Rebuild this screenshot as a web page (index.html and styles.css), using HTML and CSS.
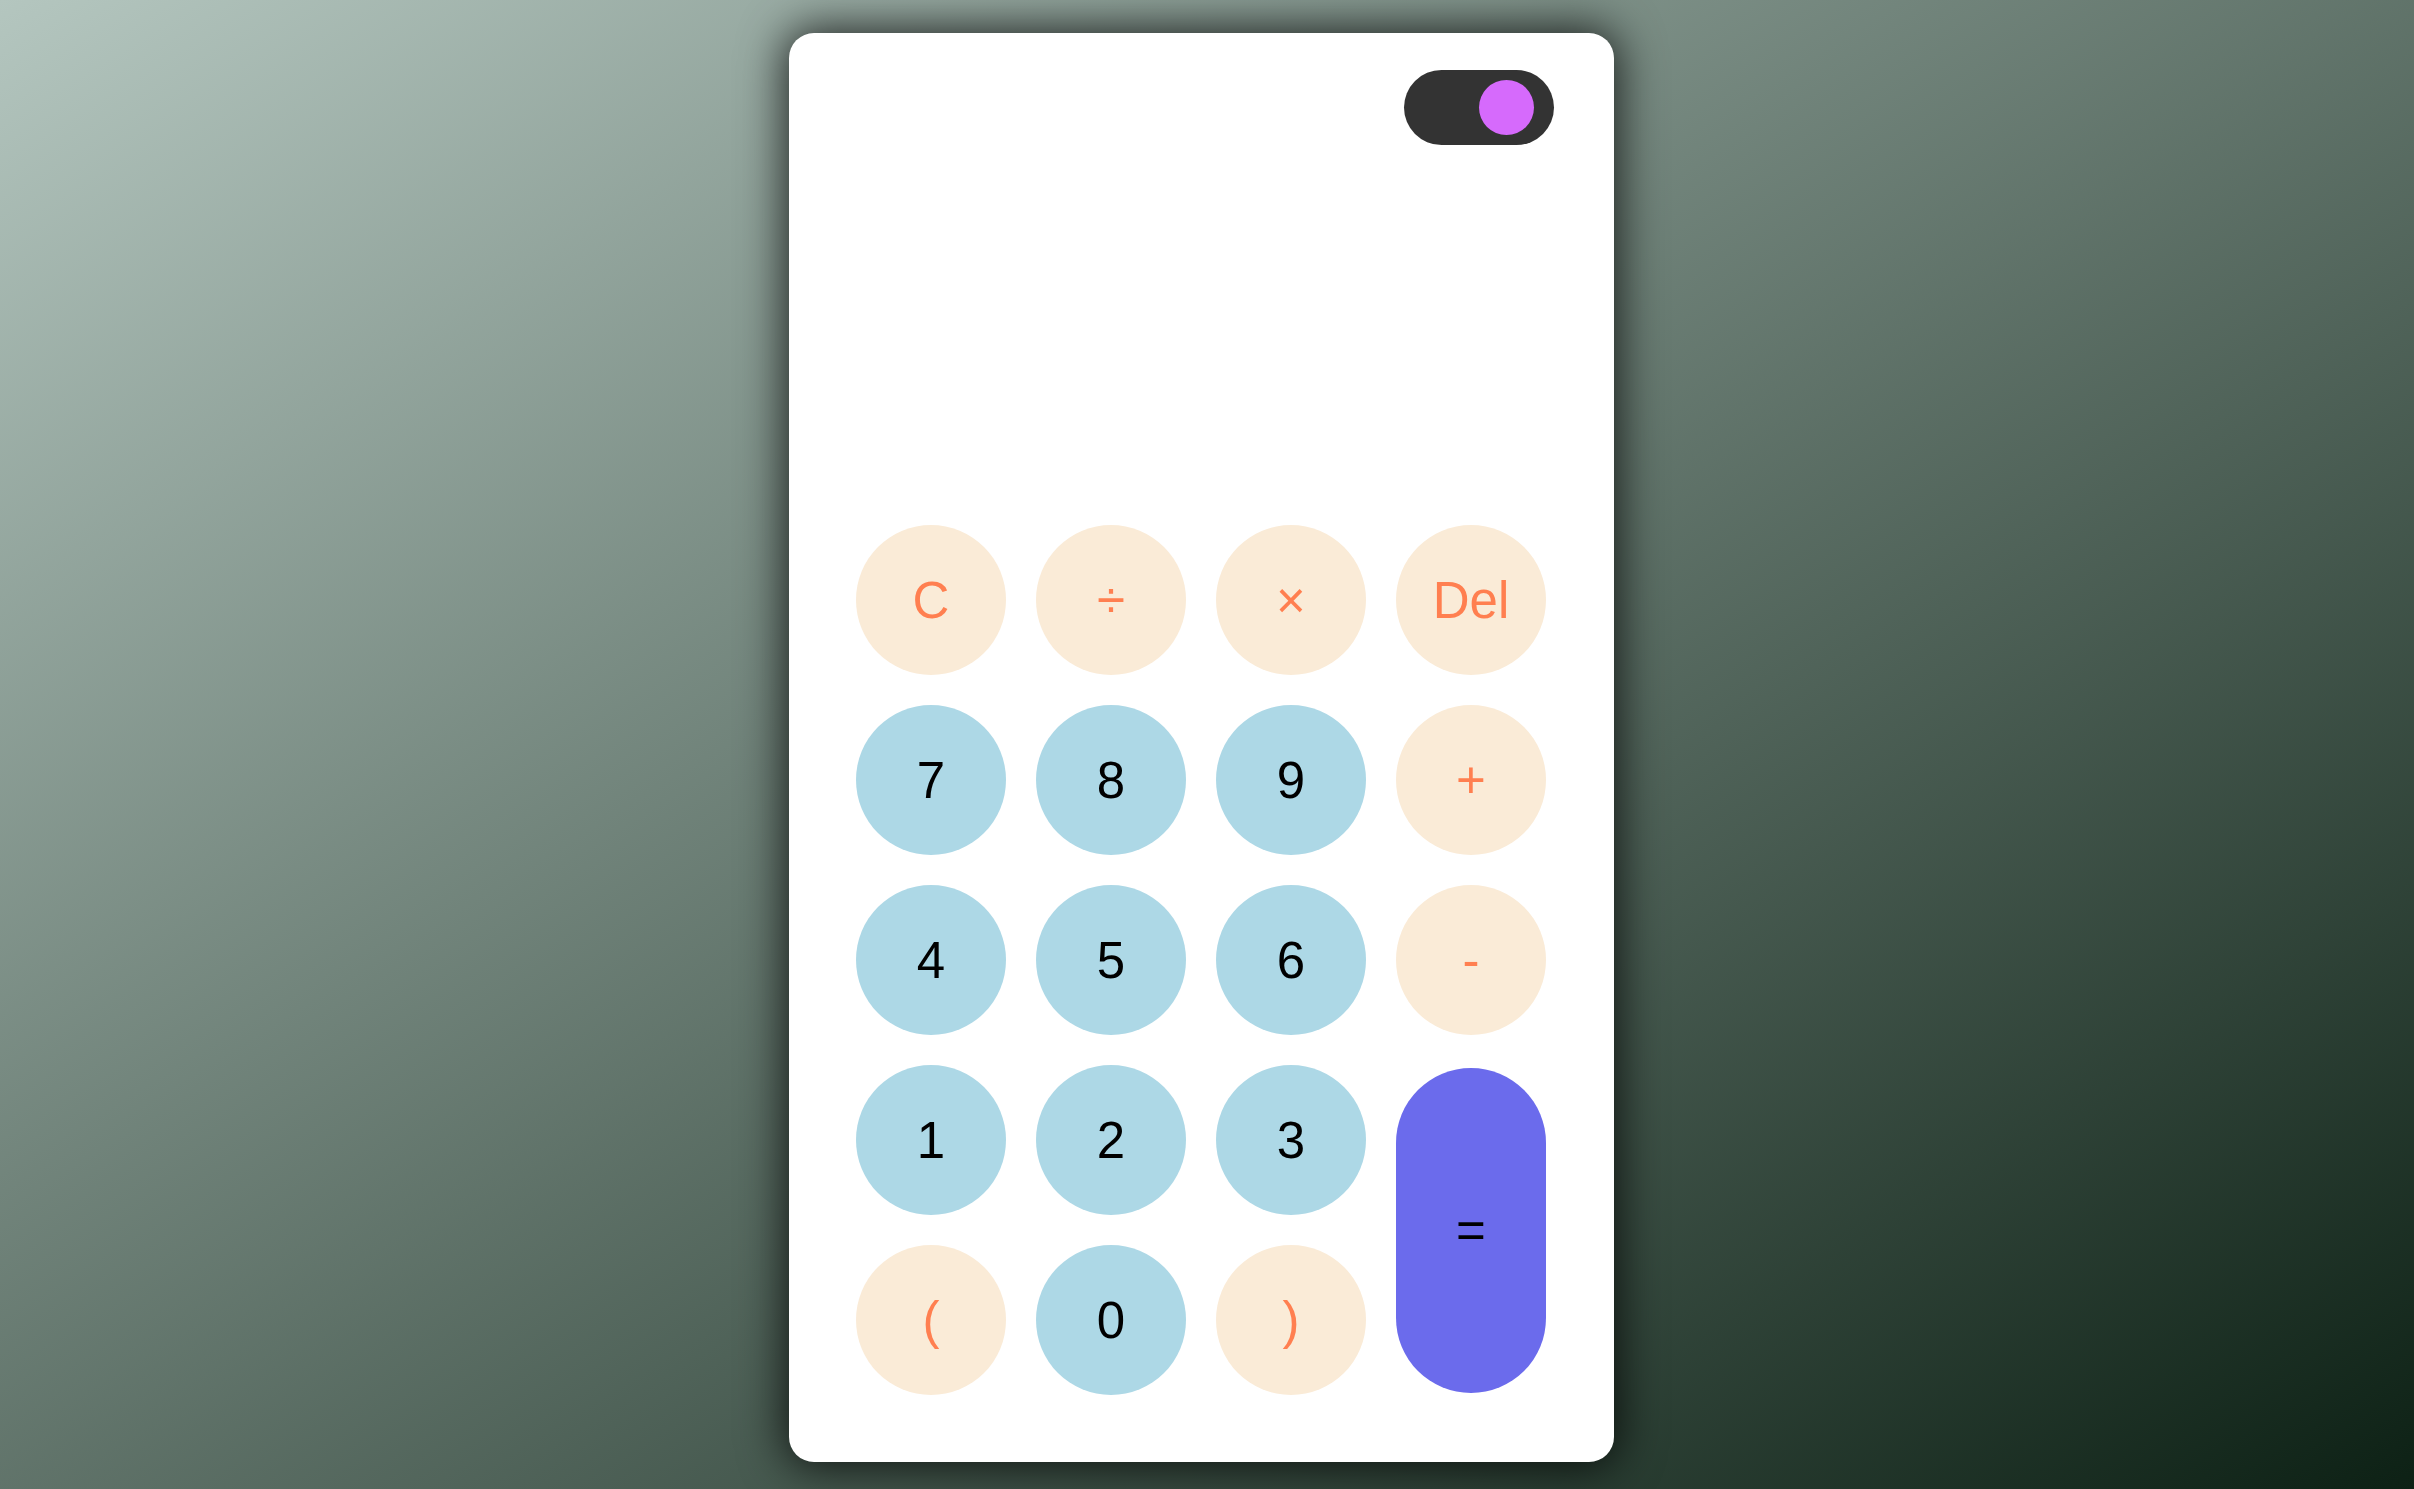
FILE: index.html
```html
<!DOCTYPE html>
<html lang="en">
<head>
<meta charset="utf-8">
<title>Calculator</title>
<link rel="stylesheet" href="styles.css">
</head>
<body>
<main class="calc">
  <div class="toggle"><span class="knob"></span></div>
  <div class="display"></div>
  <div class="keypad">
    <button class="key op">C</button>
    <button class="key op">÷</button>
    <button class="key op">×</button>
    <button class="key op">Del</button>
    <button class="key num">7</button>
    <button class="key num">8</button>
    <button class="key num">9</button>
    <button class="key op">+</button>
    <button class="key num">4</button>
    <button class="key num">5</button>
    <button class="key num">6</button>
    <button class="key op">-</button>
    <button class="key num">1</button>
    <button class="key num">2</button>
    <button class="key num">3</button>
    <button class="key equals">=</button>
    <button class="key op">(</button>
    <button class="key num">0</button>
    <button class="key op">)</button>
  </div>
</main>
</body>
</html>
```
FILE: styles.css
```css
html, body {
  margin: 0;
  height: 100%;
}
body {
  min-height: 100vh;
  box-sizing: border-box;
  display: flex;
  align-items: center;
  justify-content: center;
  padding: 6px 11px 0 0;
  background: linear-gradient(to bottom right, #b4c6bf, #0d2115);
  font-family: "Liberation Sans", Arial, sans-serif;
  overflow: hidden;
}
.calc {
  width: 825px;
  height: 1429px;
  box-sizing: border-box;
  background: #fff;
  border-radius: 25px;
  box-shadow: 0 0 45px 4px rgba(0, 0, 0, 0.78);
  display: flex;
  flex-direction: column;
  padding: 37px 60px 67px 67px;
}
.toggle {
  align-self: flex-end;
  width: 150px;
  height: 75px;
  border-radius: 38px;
  background: #333333;
  position: relative;
  flex: none;
}
.knob {
  position: absolute;
  top: 10px;
  left: 75px;
  width: 55px;
  height: 55px;
  border-radius: 50%;
  background: #d66afc;
}
.display {
  flex: 1;
}
.keypad {
  display: grid;
  grid-template-columns: repeat(4, 150px);
  grid-template-rows: repeat(5, 150px);
  gap: 30px;
}
.key {
  border: none;
  margin: 0;
  padding: 0;
  border-radius: 50%;
  font-family: "Liberation Sans", Arial, sans-serif;
  font-size: 51px;
  line-height: 1;
  display: flex;
  align-items: center;
  justify-content: center;
}
.op {
  background: #faebd7;
  color: #ff7f50;
}
.num {
  background: #add8e6;
  color: #000;
}
.equals {
  grid-column: 4;
  grid-row: 4 / span 2;
  margin: 3px 0 2px;
  border-radius: 75px;
  background: #6b6bec;
  color: #000;
}
```
